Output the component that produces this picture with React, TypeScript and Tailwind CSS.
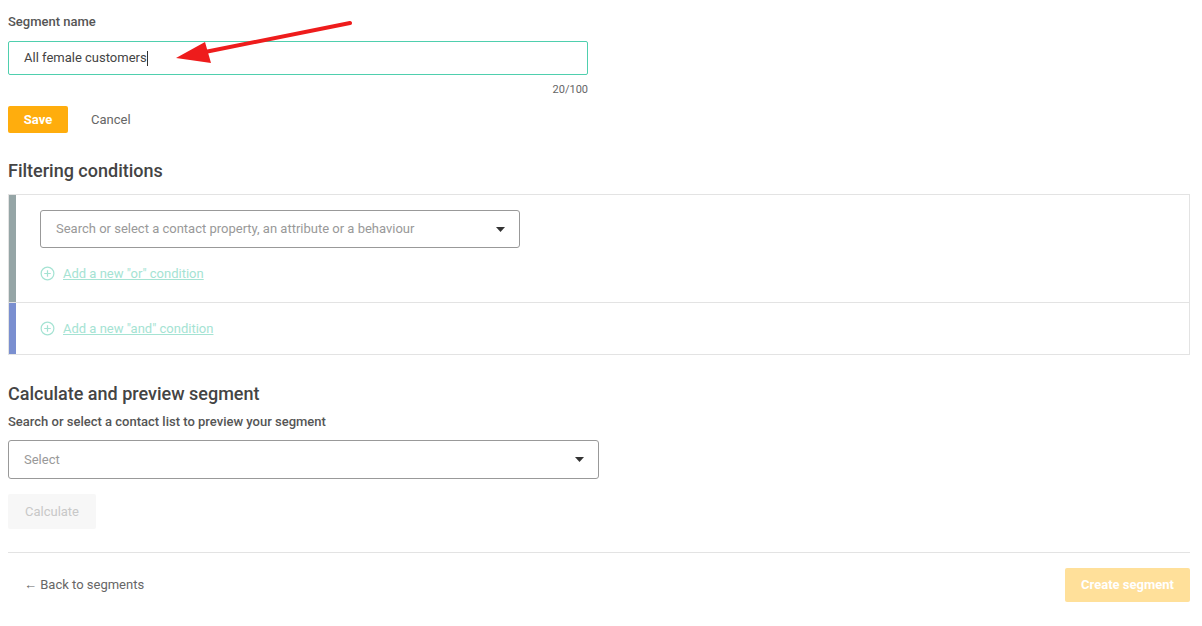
import React from "react";

const Plus = () => (
  <svg width="15" height="15" viewBox="0 0 16 16" fill="none" stroke="#a5e3d3" strokeWidth="1.3">
    <circle cx="8" cy="8" r="6.8" />
    <path d="M8 4.5v7M4.5 8h7" />
  </svg>
);
const Caret = () => (
  <svg width="9" height="5" viewBox="0 0 9 5"><path d="M0 0h9L4.5 5z" fill="#333" /></svg>
);

export default function App() {
  return (
    <div className="relative w-[1202px] h-[626px] bg-white text-[#555] overflow-hidden" style={{ fontFamily: "Roboto, 'Liberation Sans', sans-serif" }}>
      <div className="px-[8px] pt-[14px] w-[1198px]">
        <div className="text-[13px] font-medium text-[#555] leading-[16px]">Segment name</div>
        <div className="mt-[11px] w-[580px] h-[34px] border border-[#4fcfae] rounded-[2px] flex items-center pl-[15px] text-[13px] text-[#444]">
          All female customers<span className="inline-block w-[1px] h-[15px] bg-[#333]" />
        </div>
        <div className="w-[580px] text-right text-[11px] text-[#666] mt-[8px] leading-[14px]">20/100</div>
        <div className="flex items-center mt-[9px] gap-[23px]">
          <div className="w-[60px] h-[27px] bg-[#ffad0d] rounded-[2px] text-white text-[13px] font-bold flex items-center justify-center">Save</div>
          <div className="text-[13px] text-[#666]">Cancel</div>
        </div>
        <div className="mt-[26px] text-[18px] font-medium text-[#444] leading-[24px]">Filtering conditions</div>
        <div className="mt-[11px] border border-[#e3e3e3] w-[1182px]">
          <div className="flex border-b border-[#e3e3e3]">
            <div className="w-[7px] bg-[#95a5a6]" />
            <div className="pl-[24px] pt-[15px] pb-[18px]">
              <div className="w-[480px] h-[38px] border border-[#999] rounded-[3px] flex items-center justify-between pl-[15px] pr-[14px] text-[13px] text-[#999]">
                Search or select a contact property, an attribute or a behaviour
                <Caret />
              </div>
              <div className="flex items-center gap-[8px] mt-[16px] text-[13px] text-[#a5e3d3] underline"><Plus />Add a new "or" condition</div>
            </div>
          </div>
          <div className="flex">
            <div className="w-[7px] bg-[#7a8fd0]" />
            <div className="pl-[24px] py-[16px] flex items-center gap-[8px] text-[13px] text-[#a5e3d3] underline"><Plus />Add a new "and" condition</div>
          </div>
        </div>
        <div className="mt-[27px] text-[18px] font-medium text-[#444] leading-[24px]">Calculate and preview segment</div>
        <div className="mt-[8px] text-[13px] font-medium text-[#555] leading-[16px]">Search or select a contact list to preview your segment</div>
        <div className="mt-[10px] w-[591px] h-[39px] border border-[#999] rounded-[3px] flex items-center justify-between pl-[15px] pr-[14px] text-[13px] text-[#999]">
          Select<Caret />
        </div>
        <div className="mt-[15px] w-[88px] h-[35px] bg-[#f7f7f7] rounded-[2px] flex items-center justify-center text-[13px] text-[#c8c8c8]">Calculate</div>
        <div className="mt-[23px] border-t border-[#e3e3e3] w-[1182px]" />
        <div className="flex items-center justify-between w-[1182px] mt-[15px]">
          <div className="pl-[16px] text-[13px] text-[#666]">← Back to segments</div>
          <div className="w-[125px] h-[34px] bg-[#ffe09a] rounded-[2px] text-white text-[13px] font-bold flex items-center justify-center">Create segment</div>
        </div>
      </div>
      <svg className="absolute left-0 top-0" width="400" height="80">
        <line x1="350" y1="23" x2="200" y2="53" stroke="#ee1c1c" strokeWidth="4" strokeLinecap="round" />
        <path d="M176 58 L205 42 L211 63 Z" fill="#ee1c1c" />
      </svg>
    </div>
  );
}
